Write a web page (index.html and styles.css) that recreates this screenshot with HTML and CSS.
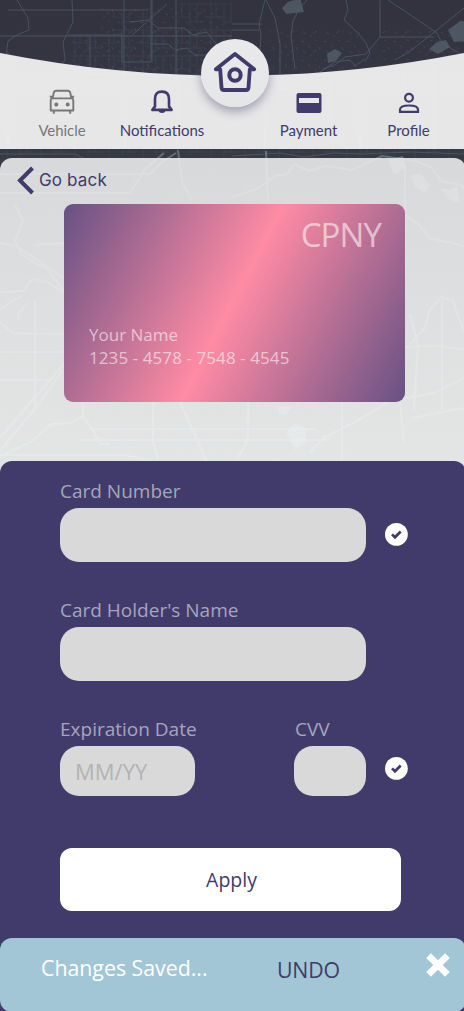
FILE: index.html
```html
<!DOCTYPE html>
<html lang="en">
<head>
<meta charset="utf-8">
<title>Payment</title>
<link rel="stylesheet" href="styles.css">
</head>
<body>
<div class="app">
  <svg class="map" viewBox="0 0 464 480" fill="none" aria-hidden="true">
    <defs>
      <pattern id="blocks" width="34" height="26" patternUnits="userSpaceOnUse">
        <path d="M0 4h34M7 0v26M0 17h20M20 4v22M20 22h14M27 4v18M12 4v13"/>
      </pattern>
      <pattern id="speckle" width="23" height="19" patternUnits="userSpaceOnUse">
        <path d="M2 3l3 1M9 7l2 3M16 2l2 1M4 13l3 2M14 14l4-2M20 9l1 3M11 17h2"/>
      </pattern>
    </defs>
    <g class="map-fine">
      <path class="fill-blocks" d="M72 35h40V12h36v18h30V0h54v80H70zM0 148h464v14H0zM0 300h64v160H0zM80 402h270v60H80zM404 300h60v110h-60zM170 165h150v36H170z"/>
      <path class="fill-speckle" d="M100 8h120v65H72V40h28zM270 30h90v40h-90zM380 30h84v30h-84zM0 200h60v100H0zM406 170h58v280h-58z"/>
    </g>
    <g class="map-area">
      <path d="M288 2l12-4 4 14-18 2-4-6zM327 54l8-5 7 4-6 8-8 2zM429 49l8-7 9-2 4 7-12 7zM448 30l12-9h6v20l-12 1z"/>
      <path class="lake" d="M388 160l15-4 3 12-12 7zM411 175l10-1 9 12-6 7-9-6zM440 188l10 2 7-4 3 17-9-2zM286 432l9-9 10 5 2 14-12 8zM278 407h14l-6 8-7-2z"/>
    </g>
    <g class="map-road">
      <path d="M8 10h140M0 36h232M68 35h54v27h29V0M124 0v78M152 0v62M176 0v76M90 36v37M132 35l35-31M72 0l1 22-10 20 2 18-5 6M17 0l11 18 1 12-12 5-9 6-2 15M130 22l18-2 10 8h26l9 7 14-3 10 13h15M150 44h18l7 6 12-2 8 7h15M232 24h30M232 30h27M265 0l-6 24 2 12-3 40M266 0l9 18 5 26v31M307 0l-8 9-6 12-2 16 4 32M346 0l2 10-4 10 14 13 8 10 4 10-5 9M380 0v37h54M380 37l-14 17-21 3-10 8-12 4M388 0l21 14 28 19 5 10 22 13M464 8l-27 22-28 22-14 8M320 72l15-10 15-2 5 6 10-7"/>
      <path d="M0 75h464M0 88h464M8 52v97M74 85v64M125 85v64M177 80v68M232 125l18-24 22-13 15 1M265 77v72M330 75v60l18 14M360 78v71M404 70v79M434 62v88"/>
      <path d="M0 154h75l10 5h100M232 156l48-3 24 4 30-4 26 1 50-2 54 2"/>
    </g>
    <g class="map-road wide">
      <path d="M0 174h150l12-12 14-9M0 193h130l15-24 19-16M178 150l4 32 10 18M232 197l25-8 18-13 12-2 7-10 15 7 16-5 27 4 30-14 34 5 15 6 10 14 20 4 14 15M266 151l2 50M405 165v110M15 205l8 16-8 20 7 14 26 15 18 24M0 243l16 3 24 16 24 16M33 245l32-2M0 292l24-1 8-12 14 2 18 12"/>
      <path d="M0 310l10-8 12-6M0 322l12 11 52 1M28 303l-10 11v6M405 215l14 10 11 13 34 8M410 344l15-16 4-17 12-14 12 4 6 18 5 12M405 347l28-1 31 3M410 315l8 30-4 65M464 378l-30 15-44 8-35 21-30 15-15 15M64 364L30 403 0 438M63 370L38 405 0 451M83 402v14l-12 7-20 1-20 18-31 14M83 416l10 14 7 14h10M0 455h125l20 5M153 402v40l5 18M180 402l27 60M248 402v38l-10 18M342 402v58M400 402l4 40M442 300v110M35 300v110M0 352h62M0 380h50M80 440h250M90 429h225M412 418l52-10"/>
    </g>
  </svg>

  <header class="topbar">
    <svg class="topbar-shape" viewBox="0 0 464 97" preserveAspectRatio="none" aria-hidden="true"><path d="M0 0Q232 46 464 0V97H0z"/></svg>
    <nav class="nav">
      <a class="nav-item vehicle">
        <svg width="26" height="26" viewBox="0 0 26 26" fill="none" stroke="currentColor" stroke-width="1.9"><path d="M1.7 11.2V21.5H24.3V11.2Q24.3 9.6 22.6 9.4H3.4Q1.7 9.6 1.7 11.2zM3.6 9.2L4.7 4Q5.2 1.8 7.2 1.8H18.8Q20.8 1.8 21.3 4L22.4 9.2M4.8 22v2.7M21.2 22v2.7M.8 7.8h2.8M22.4 7.8h2.8" stroke-linejoin="round"/><circle cx="7.3" cy="15.5" r="1.1" fill="currentColor"/><circle cx="18.7" cy="15.5" r="1.1" fill="currentColor"/></svg>
        <span>Vehicle</span>
      </a>
      <a class="nav-item notifications">
        <svg width="24" height="26" viewBox="0 0 24 26" fill="none"><path d="M2.4 20.9L5 17.4V10Q5 2.6 12 2.6Q19 2.6 19 10V17.4L21.6 20.9z" stroke="currentColor" stroke-width="2.6" stroke-linejoin="round"/><path d="M8.5 21h7a3.5 3 0 0 1-7 0z" fill="currentColor"/></svg>
        <span>Notifications</span>
      </a>
      <a class="nav-item payment">
        <svg width="26" height="26" viewBox="0 0 26 26"><path fill="currentColor" fill-rule="evenodd" d="M2.5 4h21Q25.5 4 25.5 6V22Q25.5 24 23.5 24H2.5Q.5 24 .5 22V6Q.5 4 2.5 4zM3 9v5h20V9z"/></svg>
        <span>Payment</span>
      </a>
      <a class="nav-item profile">
        <svg width="24" height="26" viewBox="0 0 24 26" fill="none" stroke="currentColor" stroke-width="2.2"><circle cx="12" cy="8.8" r="3.9"/><path d="M3 22.9v-2.2Q3 16.5 12 16.5T21 20.7v2.2z"/></svg>
        <span>Profile</span>
      </a>
    </nav>
    <a class="home">
      <svg width="44" height="42" viewBox="0 0 44 42" fill="none" stroke="currentColor" stroke-linejoin="round" stroke-linecap="round"><path stroke-width="3.8" d="M2.8 18.3L22 3 41.2 18.3H36.8L35.5 36.5Q35.3 39 33 39H11Q8.7 39 8.5 36.5L7.2 18.3z"/><circle cx="22" cy="24" r="5.7" stroke-width="4"/></svg>
    </a>
  </header>

  <main class="panel">
    <a class="back">
      <svg width="18" height="30" viewBox="0 0 18 30" fill="none"><path d="M15.5 2L3 14.5 15.5 27" stroke="currentColor" stroke-width="4"/></svg>
      <span>Go back</span>
    </a>
    <section class="bank-card">
      <div class="brand">CPNY</div>
      <div class="holder">Your Name</div>
      <div class="number">1235 - 4578 - 7548 - 4545</div>
    </section>

    <form class="form">
      <div class="group">
        <label class="l-number">Card Number</label>
        <div class="row">
          <div class="field"></div>
          <svg class="check" width="24" height="24" viewBox="0 0 24 24"><circle cx="12.4" cy="11.4" r="11.4" fill="#fff"/><path d="M8 11.4l3 2.9 5.7-5.8" fill="none" stroke="#403b6b" stroke-width="2.7"/></svg>
        </div>
      </div>
      <div class="group second">
        <label class="l-holder">Card Holder's Name</label>
        <div class="row"><div class="field"></div></div>
      </div>
      <div class="pair">
        <div class="date-group">
          <label class="l-date">Expiration Date</label>
          <div class="field short"><span>MM/YY</span></div>
        </div>
        <div class="cvv-group">
          <label class="l-cvv">CVV</label>
          <div class="field short"></div>
        </div>
        <svg class="check low" width="24" height="24" viewBox="0 0 24 24"><circle cx="12.4" cy="11.4" r="11.4" fill="#fff"/><path d="M8 11.4l3 2.9 5.7-5.8" fill="none" stroke="#403b6b" stroke-width="2.7"/></svg>
      </div>
      <button type="button" class="apply"><span>Apply</span></button>
    </form>
  </main>

  <footer class="toast">
    <span class="message">Changes Saved...</span>
    <a class="undo">UNDO</a>
    <svg class="close" width="26" height="26" viewBox="0 0 26 26" fill="none"><path d="M3.6 3.6l18.8 18.8M22.4 3.6L3.6 22.4" stroke="#fff" stroke-width="6.6"/></svg>
  </footer>
</div>
</body>
</html>
```
FILE: styles.css
```css
* { box-sizing: border-box; }
body { margin: 0; background: #33313e; font-family: "Open Sans", "Noto Sans", sans-serif; font-weight: 400; color: #403b6b; }
.app { position: relative; width: 464px; height: 1011px; overflow: hidden; display: flex; flex-direction: column; }
.map { position: absolute; left: 0; top: 0; width: 464px; height: 480px; background: linear-gradient(#33323f 0, #363a46 30%, #3c414b 100%); }
.map pattern path { stroke: #52646f; stroke-width: .6; }
.fill-blocks { fill: url(#blocks); opacity: .35; }
.fill-speckle { fill: url(#speckle); opacity: .55; }
.map-area { fill: #58666f; opacity: .7; }
.lake { fill: #7d8b91; }
.map-road { stroke: #52646e; stroke-width: 1; opacity: .65; }
.map-road.wide { stroke: #94a4aa; stroke-width: 2; opacity: .5; }

.topbar { position: relative; height: 158px; padding-top: 89px; flex: none; }
.topbar-shape { position: absolute; left: 0; top: 53px; width: 464px; height: 96px; fill: #f9f9f9; opacity: .91; }
.nav { position: relative; display: grid; grid-template-columns: 124px 76px 1fr 111px; height: 60px; }
.nav-item { display: flex; flex-direction: column; align-items: center; gap: 5px; font: 400 15px/20px Lato, sans-serif; color: #403b6b; }
.nav-item svg { flex: none; }
.nav-item span { white-space: nowrap; }
.vehicle { color: #777; }
.vehicle span { letter-spacing: -.05px; }
.payment { padding-left: 64px; }
.home { position: absolute; left: 201px; top: 39px; width: 68px; height: 68px; border-radius: 50%; display: grid; place-items: center; padding-bottom: 3px; color: #403b6b; background: linear-gradient(#e9e9eb, #e5e6e8); box-shadow: 0 5px 10px rgba(64, 59, 107, .4); }

.panel { position: relative; width: 466px; height: 853px; flex: none; border-radius: 12px 12px 0 0; background: linear-gradient(rgba(234, 234, 234, .9), rgba(245, 247, 246, .9) 300px); display: flex; flex-direction: column; }
.back { display: flex; align-items: center; gap: 4px; height: 46px; padding: 0 0 1px 17px; color: #403b6b; font: 400 17px/24px Inter, sans-serif; letter-spacing: .15px; }
.back span { padding-bottom: 1px; white-space: nowrap; }
.bank-card { flex: none; width: 341px; height: 198px; margin-left: 64px; padding: 8px 24px 0 25px; border-radius: 9px; background: linear-gradient(117.5deg, #675184, #ff8ba4 49.5%, #675184); color: rgba(255, 255, 255, .58); display: flex; flex-direction: column; white-space: nowrap; }
.brand { align-self: flex-end; font-size: 33px; line-height: 46px; letter-spacing: -.9px; }
.holder { margin-top: 65px; font-size: 17px; line-height: 23px; }
.number { font-size: 17px; line-height: 23px; letter-spacing: .08px; }

.form { margin-top: 59px; width: 466px; height: 550px; padding: 18px 0 0 60px; border-radius: 12px 12px 0 0; background: #403b6b; display: flex; flex-direction: column; }
label { display: block; height: 29px; font-size: 19px; line-height: 25px; color: #a8a5bc; white-space: nowrap; }
.group { height: 119px; }
.row { display: flex; align-items: center; gap: 18px; }
.field { width: 306px; height: 54px; border-radius: 19px; background: #d9d9d9; }
.pair { display: flex; height: 131px; }
.date-group { width: 234px; }
.cvv-group { width: 90px; }
.l-cvv { padding-left: 1px; }
.field.short { height: 50px; width: 135px; padding: 8px 0 0 15px; font-size: 22px; line-height: 34px; color: #b3b3b3; }
.cvv-group .field.short { width: 72px; }
.check.low { margin-top: 40px; }
.apply { width: 341px; height: 63px; border: 0; border-radius: 12px; background: #fff; color: #403b6b; font: 400 19.5px/28px "Open Sans", sans-serif; padding: 0 0 0 2px; }

.toast { position: relative; flex: none; width: 466px; height: 74px; margin-top: -73px; border-radius: 12px; background: #a3c6d6; display: flex; align-items: flex-start; padding: 14px 0 0 41px; white-space: nowrap; }
.message { width: 236px; font-size: 21.3px; line-height: 32px; color: #fff; }
.undo { width: 148px; padding-top: 2px; font-size: 21.3px; line-height: 32px; letter-spacing: -.2px; color: #403b6b; }
.close { border-radius: 3px; }
```
